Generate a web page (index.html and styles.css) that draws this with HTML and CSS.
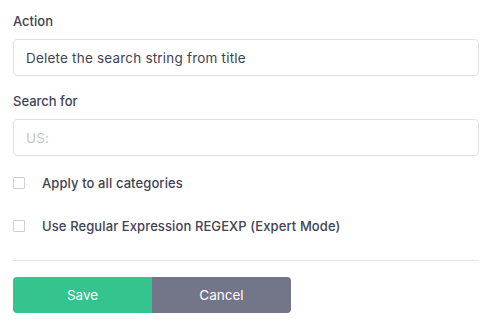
FILE: index.html
```html
<!DOCTYPE html>
<html lang="en">
<head>
  <meta charset="UTF-8">
  <meta name="viewport" content="width=device-width, initial-scale=1.0">
  <title>Search rule</title>
  <link rel="stylesheet" href="styles.css">
</head>
<body>
  <form class="rule-form">
    <div class="input-group">
      <label for="action">Action</label>
      <input type="text" id="action" value="Delete the search string from title">
    </div>
    <div class="input-group">
      <label for="search">Search for</label>
      <input type="text" id="search" placeholder="US:">
    </div>
    <label class="check">
      <input type="checkbox">
      <span>Apply to all categories</span>
    </label>
    <label class="check">
      <input type="checkbox">
      <span>Use Regular Expression REGEXP (Expert Mode)</span>
    </label>
    <hr class="divider">
    <div class="buttons">
      <button type="submit" class="btn-save">Save</button>
      <button type="button" class="btn-cancel">Cancel</button>
    </div>
  </form>
</body>
</html>
```
FILE: styles.css
```css
/* Reset */
* {
  margin: 0;
  padding: 0;
  box-sizing: border-box;
}

body {
  font-family: Inter, "Open Sans", sans-serif;
  background-color: #fff;
  color: #3f4254;
  padding: 13px 12px 0 13px;
}

.rule-form {
  display: flex;
  flex-direction: column;
}

.input-group {
  display: flex;
  flex-direction: column;
  margin-bottom: 17px;
}

.input-group label {
  font-size: 13px;
  font-weight: 500;
  line-height: 16px;
  margin-bottom: 10px;
}

.input-group input {
  height: 37px;
  padding: 0 12px;
  border: 1px solid #e0e0e6;
  border-radius: 4px;
  font-family: inherit;
  font-size: 13.5px;
  letter-spacing: 0.2px;
  color: #3f4254;
  outline: none;
}

.input-group input::placeholder {
  color: #c4c5d0;
}

/* Checkboxes */
.check {
  display: flex;
  align-items: center;
  gap: 17px;
  font-size: 13px;
  font-weight: 500;
  letter-spacing: 0.1px;
  height: 20px;
  margin-bottom: 23px;
}

.check input {
  appearance: none;
  width: 12px;
  height: 12px;
  border: 1px solid #cfd0d8;
  border-radius: 1px;
  background: #fff;
}

.divider {
  border: none;
  border-top: 1px solid #e4e4e8;
  margin: 1px 0 16px;
}

.buttons {
  display: flex;
}

.buttons button {
  width: 139px;
  height: 36px;
  border: none;
  font-family: inherit;
  font-size: 13.5px;
  color: #fff;
  cursor: pointer;
}

.btn-save {
  background-color: #35c38e;
  border-radius: 4px 0 0 4px;
}

.btn-cancel {
  background-color: #737589;
  border-radius: 0 4px 4px 0;
}
```
